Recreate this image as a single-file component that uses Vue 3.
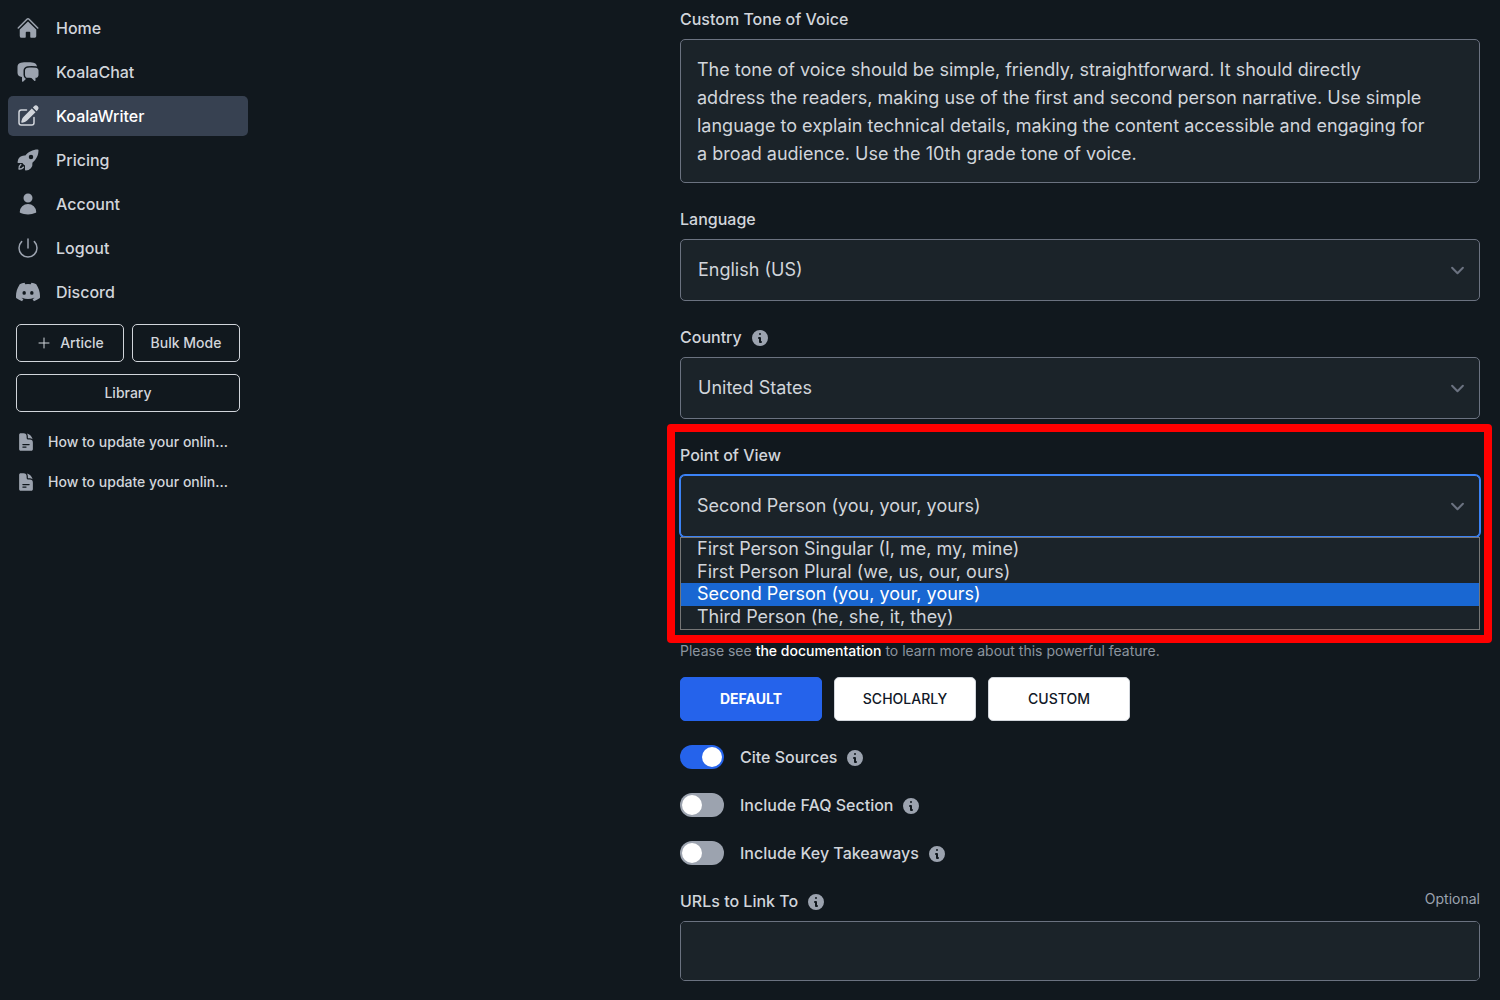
<template>
  <div class="layout">
    <aside class="sidebar">
      <nav class="nav">
        <a
          v-for="item in navItems"
          :key="item.label"
          href="#"
          class="nav-link"
          :class="{ active: item.label === activeItem }"
          @click.prevent="activeItem = item.label"
        >
          <svg
            class="nav-icon"
            :class="{ outline: item.outline }"
            :viewBox="item.viewBox || '0 0 24 24'"
            aria-hidden="true"
          >
            <path v-for="d in item.paths" :key="d" fill-rule="evenodd" :d="d" />
          </svg>
          <span>{{ item.label }}</span>
        </a>
      </nav>

      <div class="actions">
        <button type="button" class="action">
          <svg class="plus" viewBox="0 0 24 24" aria-hidden="true">
            <path d="M12 4.5v15m7.5-7.5h-15" />
          </svg>
          Article
        </button>
        <button type="button" class="action">Bulk Mode</button>
        <button type="button" class="action wide">Library</button>
      </div>

      <div class="documents">
        <a v-for="n in 2" :key="n" href="#" class="document">
          <svg class="document-icon" viewBox="0 0 24 24" aria-hidden="true">
            <path
              fill-rule="evenodd"
              d="M5.625 1.5c-1.036 0-1.875.84-1.875 1.875v17.25c0 1.035.84 1.875 1.875 1.875h12.75c1.035 0 1.875-.84 1.875-1.875V12.75A3.75 3.75 0 0016.5 9h-1.875a1.875 1.875 0 01-1.875-1.875V5.25A3.75 3.75 0 009 1.5H5.625zM7.5 15a.75.75 0 01.75-.75h7.5a.75.75 0 010 1.5h-7.5A.75.75 0 017.5 15zm.75 2.25a.75.75 0 000 1.5H12a.75.75 0 000-1.5H8.25z"
            />
            <path
              d="M12.971 1.816A5.23 5.23 0 0114.25 5.25v1.875c0 .207.168.375.375.375H16.5a5.23 5.23 0 013.434 1.279 9.768 9.768 0 00-6.963-6.963z"
            />
          </svg>
          <span>How to update your onlin...</span>
        </a>
      </div>
    </aside>

    <main class="content">
      <form class="form" @submit.prevent>
        <div class="field">
          <label for="tone" class="label">Custom Tone of Voice</label>
          <textarea id="tone" v-model="tone" class="control tone"></textarea>
        </div>

        <div class="field">
          <label for="language" class="label">Language</label>
          <div class="select-wrap">
            <select id="language" class="control select">
              <option>English (US)</option>
            </select>
            <svg class="chevron" viewBox="0 0 20 20" aria-hidden="true">
              <path d="M6 8l4 4 4-4" />
            </svg>
          </div>
        </div>

        <div class="field">
          <div class="label-row">
            <label for="country" class="label">Country</label>
            <svg class="info" viewBox="0 0 20 20" aria-hidden="true">
              <path fill-rule="evenodd" :d="infoPath" />
            </svg>
          </div>
          <div class="select-wrap">
            <select id="country" class="control select">
              <option>United States</option>
            </select>
            <svg class="chevron" viewBox="0 0 20 20" aria-hidden="true">
              <path d="M6 8l4 4 4-4" />
            </svg>
          </div>
        </div>

        <div class="field highlighted">
          <label for="pov" class="label">Point of View</label>
          <div class="select-wrap">
            <select id="pov" v-model="pov" class="control select open">
              <option v-for="option in povOptions" :key="option">{{ option }}</option>
            </select>
            <svg class="chevron" viewBox="0 0 20 20" aria-hidden="true">
              <path d="M6 8l4 4 4-4" />
            </svg>
            <ul class="menu" role="listbox" aria-label="Point of View">
              <li
                v-for="option in povOptions"
                :key="option"
                class="menu-option"
                :class="{ selected: option === pov }"
                role="option"
                :aria-selected="option === pov"
                @click="pov = option"
              >
                {{ option }}
              </li>
            </ul>
          </div>
        </div>

        <div class="data-field">
          <p class="help">
            Please see <a href="#" class="help-link">the documentation</a> to learn more about
            this powerful feature.
          </p>
          <div class="modes">
            <button
              v-for="name in modes"
              :key="name"
              type="button"
              class="mode"
              :class="{ chosen: name === mode }"
              @click="mode = name"
            >
              {{ name }}
            </button>
          </div>
        </div>

        <div v-for="toggle in toggles" :key="toggle.id" class="toggle-row">
          <input :id="toggle.id" v-model="toggle.on" type="checkbox" class="toggle" />
          <label :for="toggle.id" class="label">{{ toggle.label }}</label>
          <svg class="info" viewBox="0 0 20 20" aria-hidden="true">
            <path fill-rule="evenodd" :d="infoPath" />
          </svg>
        </div>

        <div class="field">
          <div class="label-row">
            <label for="urls" class="label">URLs to Link To</label>
            <svg class="info" viewBox="0 0 20 20" aria-hidden="true">
              <path fill-rule="evenodd" :d="infoPath" />
            </svg>
            <span class="optional">Optional</span>
          </div>
          <textarea id="urls" class="control urls"></textarea>
        </div>
      </form>
    </main>
  </div>
</template>

<script setup>
import { ref, reactive } from 'vue';

const navItems = [
  {
    label: 'Home',
    paths: [
      'M11.47 3.84a.75.75 0 011.06 0l8.69 8.69a.75.75 0 101.06-1.06l-8.689-8.69a2.25 2.25 0 00-3.182 0l-8.69 8.69a.75.75 0 001.061 1.06l8.69-8.69z',
      'M12 5.432l8.159 8.159c.03.03.06.058.091.086v6.198c0 1.035-.84 1.875-1.875 1.875H15a.75.75 0 01-.75-.75v-4.5a.75.75 0 00-.75-.75h-3a.75.75 0 00-.75.75V21a.75.75 0 01-.75.75H5.625a1.875 1.875 0 01-1.875-1.875v-6.198a2.29 2.29 0 00.091-.086L12 5.43z',
    ],
  },
  {
    label: 'KoalaChat',
    paths: [
      'M4.913 2.658c2.075-.27 4.19-.408 6.337-.408 2.147 0 4.262.139 6.337.408 1.922.25 3.291 1.861 3.405 3.727a4.403 4.403 0 00-1.032-.211 50.89 50.89 0 00-8.42 0c-2.358.196-4.04 2.19-4.04 4.434v4.286a4.47 4.47 0 002.433 3.984L7.28 21.53A.75.75 0 016 21v-4.03a48.527 48.527 0 01-1.087-.128C2.905 16.58 1.5 14.833 1.5 12.862V6.638c0-1.97 1.405-3.718 3.413-3.979z',
      'M15.75 7.5c-1.376 0-2.739.057-4.086.169C10.124 7.797 9 9.103 9 10.609v4.285c0 1.507 1.128 2.814 2.67 2.94 1.243.102 2.5.157 3.768.165l2.782 2.781a.75.75 0 001.28-.53v-2.39l.33-.026c1.542-.125 2.67-1.433 2.67-2.94v-4.286c0-1.505-1.125-2.811-2.664-2.94A49.392 49.392 0 0015.75 7.5z',
    ],
  },
  {
    label: 'KoalaWriter',
    paths: [
      'M21.731 2.269a2.625 2.625 0 00-3.712 0l-1.157 1.157 3.712 3.712 1.157-1.157a2.625 2.625 0 000-3.712zM19.513 8.199l-3.712-3.712-8.4 8.4a5.25 5.25 0 00-1.32 2.214l-.8 2.685a.75.75 0 00.933.933l2.685-.8a5.25 5.25 0 002.214-1.32l8.4-8.4z',
      'M5.25 5.25a3 3 0 00-3 3v10.5a3 3 0 003 3h10.5a3 3 0 003-3V13.5a.75.75 0 00-1.5 0v5.25a1.5 1.5 0 01-1.5 1.5H5.25a1.5 1.5 0 01-1.5-1.5V8.25a1.5 1.5 0 011.5-1.5h5.25a.75.75 0 000-1.5H5.25z',
    ],
  },
  {
    label: 'Pricing',
    paths: [
      'M9.315 7.584C12.195 3.883 16.695 1.5 21.75 1.5a.75.75 0 01.75.75c0 5.056-2.383 9.555-6.084 12.436A6.75 6.75 0 019.75 22.5a.75.75 0 01-.75-.75v-4.131A15.838 15.838 0 016.382 15H2.25a.75.75 0 01-.75-.75 6.75 6.75 0 017.815-6.666zM15 6.75a2.25 2.25 0 100 4.5 2.25 2.25 0 000-4.5z',
      'M5.26 17.242a.75.75 0 10-.897-1.203 5.243 5.243 0 00-2.05 5.022.75.75 0 00.625.627 5.243 5.243 0 005.022-2.051.75.75 0 10-1.202-.897 3.744 3.744 0 01-3.008 1.51c0-1.23.592-2.323 1.51-3.008z',
    ],
  },
  {
    label: 'Account',
    paths: [
      'M7.5 6a4.5 4.5 0 119 0 4.5 4.5 0 01-9 0zM3.751 20.105a8.25 8.25 0 0116.498 0 .75.75 0 01-.437.695A18.683 18.683 0 0112 22.5c-2.786 0-5.433-.608-7.812-1.7a.75.75 0 01-.437-.695z',
    ],
  },
  {
    label: 'Logout',
    outline: true,
    paths: ['M5.636 5.636a9 9 0 1012.728 0M12 3v9'],
  },
  {
    label: 'Discord',
    viewBox: '0 0 16 16',
    paths: [
      'M13.545 2.907a13.227 13.227 0 0 0-3.257-1.011.05.05 0 0 0-.052.025c-.141.25-.297.577-.406.833a12.19 12.19 0 0 0-3.658 0 8.258 8.258 0 0 0-.412-.833.051.051 0 0 0-.052-.025c-1.125.194-2.22.534-3.257 1.011a.041.041 0 0 0-.021.018C.356 6.024-.213 9.047.066 12.032c.001.014.01.028.021.037a13.276 13.276 0 0 0 3.995 2.02.05.05 0 0 0 .056-.019c.308-.42.582-.863.818-1.329a.05.05 0 0 0-.01-.059.051.051 0 0 0-.018-.011 8.875 8.875 0 0 1-1.248-.595.05.05 0 0 1-.02-.066.051.051 0 0 1 .015-.019c.084-.063.168-.129.248-.195a.05.05 0 0 1 .051-.007c2.619 1.196 5.454 1.196 8.041 0a.052.052 0 0 1 .053.007c.08.066.164.132.248.195a.051.051 0 0 1-.004.085 8.254 8.254 0 0 1-1.249.594.05.05 0 0 0-.03.03.052.052 0 0 0 .003.041c.24.465.515.909.817 1.329a.05.05 0 0 0 .056.019 13.235 13.235 0 0 0 4.001-2.02.049.049 0 0 0 .021-.037c.334-3.451-.559-6.449-2.366-9.106a.034.034 0 0 0-.02-.019ZM4.3 8.6a1.15 1.3 0 1 0 2.3 0a1.15 1.3 0 1 0-2.3 0ZM9.4 8.6a1.15 1.3 0 1 0 2.3 0a1.15 1.3 0 1 0-2.3 0Z',
    ],
  },
];
const activeItem = ref('KoalaWriter');

const infoPath =
  'M18 10a8 8 0 11-16 0 8 8 0 0116 0zm-7-4a1 1 0 11-2 0 1 1 0 012 0zM9 9a1 1 0 000 2v3a1 1 0 001 1h1a1 1 0 100-2v-3a1 1 0 00-1-1H9z';

const tone = ref(
  'The tone of voice should be simple, friendly, straightforward. It should directly address the readers, making use of the first and second person narrative. Use simple language to explain technical details, making the content accessible and engaging for a broad audience. Use the 10th grade tone of voice.',
);

const povOptions = [
  'First Person Singular (I, me, my, mine)',
  'First Person Plural (we, us, our, ours)',
  'Second Person (you, your, yours)',
  'Third Person (he, she, it, they)',
];
const pov = ref(povOptions[2]);

const modes = ['DEFAULT', 'SCHOLARLY', 'CUSTOM'];
const mode = ref('DEFAULT');

const toggles = reactive([
  { id: 'cite', label: 'Cite Sources', on: true },
  { id: 'faq', label: 'Include FAQ Section', on: false },
  { id: 'takeaways', label: 'Include Key Takeaways', on: false },
]);
</script>

<style>
body {
  background: #11181e;
}
</style>

<style scoped>
.layout,
.layout * {
  box-sizing: border-box;
}

.layout {
  display: flex;
  color: #d1d5db;
  font-family: Inter, 'Liberation Sans', sans-serif;
  font-size: 16px;
  line-height: 24px;
}

a {
  color: inherit;
  text-decoration: none;
}

button,
select,
textarea {
  font-family: inherit;
}

/* Sidebar */
.sidebar {
  flex: none;
  width: 256px;
  padding: 8px;
}

.nav {
  display: flex;
  flex-direction: column;
  gap: 4px;
}

.nav-link {
  display: flex;
  align-items: center;
  gap: 16px;
  padding: 8px;
  border-radius: 5px;
  font-weight: 500;
}

.nav-link.active {
  background: #374151;
  color: #fff;
}

.nav-icon {
  width: 24px;
  height: 24px;
  fill: #9ca3af;
}

.nav-icon.outline {
  fill: none;
  stroke: #9ca3af;
  stroke-width: 1.5;
  stroke-linecap: round;
}

.active .nav-icon {
  fill: #d1d5db;
}

.actions {
  display: grid;
  grid-template-columns: 1fr 1fr;
  gap: 12px 8px;
  padding: 12px 8px 10px;
}

.action {
  display: flex;
  align-items: center;
  justify-content: center;
  gap: 8px;
  padding: 8px;
  border: 1px solid #d1d5db;
  border-radius: 5px;
  background: transparent;
  color: #d1d5db;
  font-size: 14px;
  font-weight: 500;
  line-height: 20px;
}

.wide {
  grid-column: span 2;
}

.plus {
  width: 16px;
  height: 16px;
  fill: none;
  stroke: #d1d5db;
  stroke-width: 1.5;
  stroke-linecap: round;
}

.documents {
  padding: 0 8px;
}

.document {
  display: flex;
  align-items: center;
  gap: 12px;
  height: 40px;
  font-size: 14px;
  font-weight: 500;
}

.document-icon {
  width: 20px;
  height: 20px;
  fill: #9ca3af;
}

/* Form */
.content {
  display: flex;
  flex: 1;
  justify-content: flex-end;
  padding: 7px 20px 16px;
}

.form {
  display: flex;
  flex: 1;
  flex-direction: column;
  gap: 24px;
  max-width: 800px;
}

.field {
  display: flex;
  flex-direction: column;
  gap: 8px;
}

.label {
  font-weight: 500;
}

.label-row {
  display: flex;
  align-items: center;
  gap: 8px;
}

.info {
  width: 20px;
  height: 20px;
  margin-top: 2px;
  fill: #9ca3af;
}

.optional {
  align-self: flex-start;
  margin-left: auto;
  color: #9ca3af;
  font-size: 14px;
  line-height: 20px;
}

.control {
  display: block;
  width: 100%;
  margin: 0;
  padding: 16px;
  border: 1px solid #6b7280;
  border-radius: 5px;
  outline: none;
  background: #1b2329;
  color: #d1d5db;
  font-size: 18px;
  line-height: 28px;
  resize: none;
}

.tone {
  height: 144px;
  padding-right: 48px;
  overflow: hidden;
}

.urls {
  height: 60px;
}

.select-wrap {
  position: relative;
}

.select {
  appearance: none;
  padding-left: 17px;
}

.select.open {
  padding-left: 16px;
  border-color: #3b82f6;
  box-shadow: 0 0 0 1px #3b82f6;
}

.chevron {
  position: absolute;
  top: 18px;
  right: 9px;
  width: 27px;
  height: 27px;
  fill: none;
  stroke: #6b7280;
  stroke-width: 1.5;
  stroke-linecap: round;
  stroke-linejoin: round;
  pointer-events: none;
}

.menu {
  position: absolute;
  top: 100%;
  left: 0;
  z-index: 1;
  display: flex;
  flex-direction: column;
  width: 100%;
  height: 93px;
  margin: 0;
  padding: 0 0 1px;
  border: 1px solid #767676;
  background: #1b2329;
  font-size: 18px;
  line-height: 22px;
  list-style: none;
}

.menu-option {
  flex: 1;
  padding: 0 16px;
}

.menu-option.selected {
  background: #1967d2;
  color: #fff;
}

/* Red frame around the field and its open menu */
.highlighted {
  position: relative;
}

.highlighted::after {
  content: '';
  position: absolute;
  top: -19px;
  right: -12px;
  left: -13px;
  z-index: 2;
  box-sizing: border-box;
  height: 219px;
  border: 8px solid #f00;
  border-radius: 4px;
  pointer-events: none;
}

.data-field {
  display: flex;
  flex-direction: column;
  gap: 16px;
  padding-top: 80px;
}

.help {
  margin: 0;
  color: #8b949e;
  font-size: 14px;
  line-height: 20px;
}

.help-link {
  color: #fff;
  font-weight: 500;
}

.modes {
  display: flex;
  gap: 12px;
}

.mode {
  width: 142px;
  height: 44px;
  border: 1px solid #d1d5db;
  border-radius: 5px;
  background: #fff;
  color: #111827;
  font-size: 14px;
  font-weight: 500;
  line-height: 20px;
}

.mode.chosen {
  border-color: #2563eb;
  background: #2563eb;
  color: #fff;
  font-weight: 700;
}

.toggle-row {
  display: flex;
  align-items: center;
  gap: 8px;
}

.toggle {
  appearance: none;
  width: 44px;
  height: 24px;
  margin: 0 8px 0 0;
  padding: 2px;
  border-radius: 12px;
  background: #9ca3af;
}

.toggle::before {
  content: '';
  display: block;
  width: 20px;
  height: 20px;
  border-radius: 50%;
  background: #fff;
}

.toggle:checked {
  background: #2563eb;
}

.toggle:checked::before {
  margin-left: auto;
}
</style>
